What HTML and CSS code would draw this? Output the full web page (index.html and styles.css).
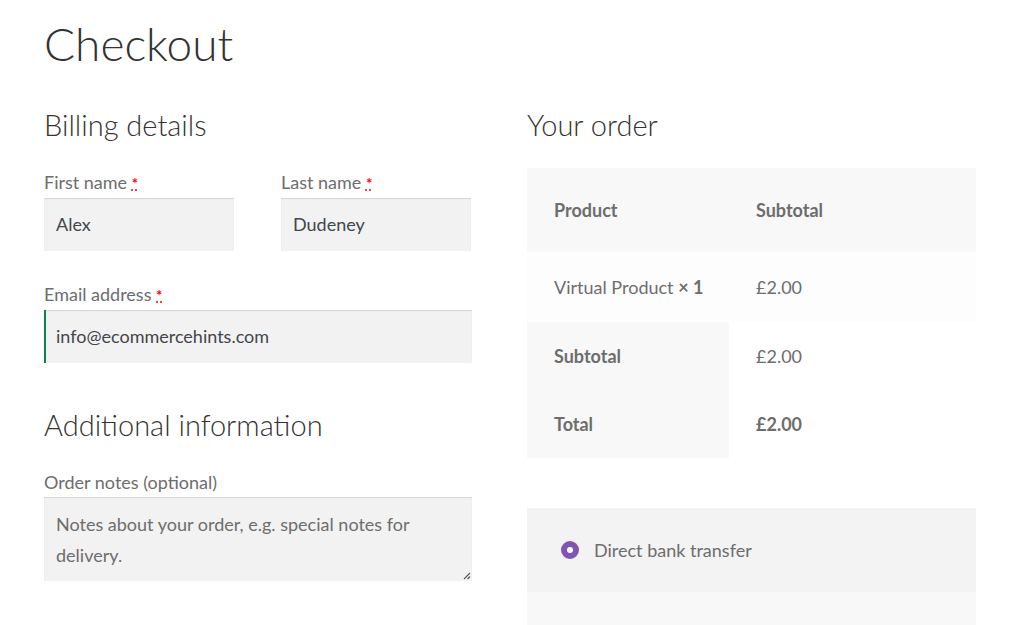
FILE: index.html
```html
<!DOCTYPE html>
<html lang="en">
<head>
<meta charset="utf-8">
<title>Checkout</title>
<link rel="stylesheet" href="styles.css">
</head>
<body>
<main class="page">
  <h1 class="page-title">Checkout</h1>
  <div class="checkout">
    <section class="col-left">
      <h3 class="section-title">Billing details</h3>
      <div class="row-split">
        <div class="field">
          <div class="label">First name <abbr class="required">*</abbr></div>
          <div class="input">Alex</div>
        </div>
        <div class="field">
          <div class="label">Last name <abbr class="required">*</abbr></div>
          <div class="input">Dudeney</div>
        </div>
      </div>
      <div class="field field-email">
        <div class="label">Email address <abbr class="required">*</abbr></div>
        <div class="input input-valid">info@ecommercehints.com</div>
      </div>
      <h3 class="section-title section-additional">Additional information</h3>
      <div class="field">
        <div class="label">Order notes (optional)</div>
        <div class="input textarea">
          <span class="placeholder">Notes about your order, e.g. special notes for delivery.</span>
          <svg class="grip" width="9" height="9" viewBox="0 0 9 9"><path d="M8 2 L2 8 M8 5.5 L5.5 8" stroke="#555" stroke-width="1.1" fill="none"/></svg>
        </div>
      </div>
    </section>
    <section class="col-right">
      <h3 class="section-title">Your order</h3>
      <table class="order-table">
        <colgroup><col class="col1"><col class="col2"></colgroup>
        <thead>
          <tr><th>Product</th><th>Subtotal</th></tr>
        </thead>
        <tbody>
          <tr><td>Virtual Product <strong>× 1</strong></td><td>£2.00</td></tr>
        </tbody>
        <tfoot>
          <tr><th>Subtotal</th><td>£2.00</td></tr>
          <tr><th>Total</th><td><strong>£2.00</strong></td></tr>
        </tfoot>
      </table>
      <div class="payment">
        <div class="payment-method">
          <span class="radio"></span>
          <span class="method-name">Direct bank transfer</span>
        </div>
        <div class="payment-box"></div>
      </div>
    </section>
  </div>
</main>
</body>
</html>
```
FILE: styles.css
```css
html, body {
  margin: 0;
  padding: 0;
  background: #ffffff;
}
body {
  font-family: "Lato", "Open Sans", sans-serif;
  font-size: 18px;
  color: #6d6d6d;
  overflow: hidden;
}
.page {
  padding: 15px 0 0 44px;
  width: 932px;
}
.page-title {
  margin: 0 0 34px 0;
  font-size: 46px;
  font-weight: 300;
  line-height: 57.6px;
  color: #333333;
}
.checkout {
  display: flex;
  gap: 55px;
  align-items: flex-start;
}
.col-left {
  width: 428px;
}
.col-right {
  width: 449px;
}
.section-title {
  margin: 0 0 26px 0;
  font-size: 29px;
  font-weight: 300;
  line-height: 35px;
  color: #333333;
}
.section-additional {
  margin-top: 44px;
}
.row-split {
  display: flex;
  gap: 47px;
  margin-bottom: 29px;
}
.row-split .field {
  width: 190px;
}
.label {
  line-height: 29px;
  color: #6d6d6d;
}
.required {
  color: #ff0000;
  text-decoration: underline dotted;
  font-weight: 700;
  font-size: 15px;
}
.input {
  background: #f2f2f2;
  box-shadow: inset 0 1px 1px rgba(0, 0, 0, 0.125);
  padding: 12px;
  line-height: 29px;
  color: #43454b;
}
.input-valid {
  border-left: 2px solid #0f834d;
  padding-left: 10px;
}
.textarea {
  position: relative;
  height: 60px;
  line-height: 31px;
}
.placeholder {
  color: #6d6d6d;
}
.grip {
  position: absolute;
  right: 1px;
  bottom: 1px;
}
.order-table {
  width: 449px;
  table-layout: fixed;
  border-collapse: collapse;
  border-spacing: 0;
  line-height: 30px;
}
.col1 {
  width: 202px;
}
.col2 {
  width: 247px;
}
.order-table th,
.order-table td {
  text-align: left;
  padding: 19px 27px;
  font-weight: 400;
  white-space: nowrap;
}
.order-table th {
  font-weight: 700;
  background: #f8f8f8;
}
.order-table thead th {
  padding-top: 27px;
  padding-bottom: 27px;
}
.order-table tbody td {
  background: #fdfdfd;
  padding-top: 20px;
  padding-bottom: 20px;
}
.order-table tfoot td {
  background: #ffffff;
}
.order-table strong {
  font-weight: 700;
}
.payment {
  margin-top: 50px;
  background: #f8f8f8;
}
.payment-method {
  display: flex;
  align-items: center;
  gap: 15px;
  padding: 27px 34px;
  line-height: 30px;
  background: #f3f3f3;
}
.radio {
  width: 18px;
  height: 18px;
  box-sizing: border-box;
  border-radius: 50%;
  border: 6px solid #7f54b3;
  background: #ffffff;
}
.payment-box {
  height: 60px;
}
```
